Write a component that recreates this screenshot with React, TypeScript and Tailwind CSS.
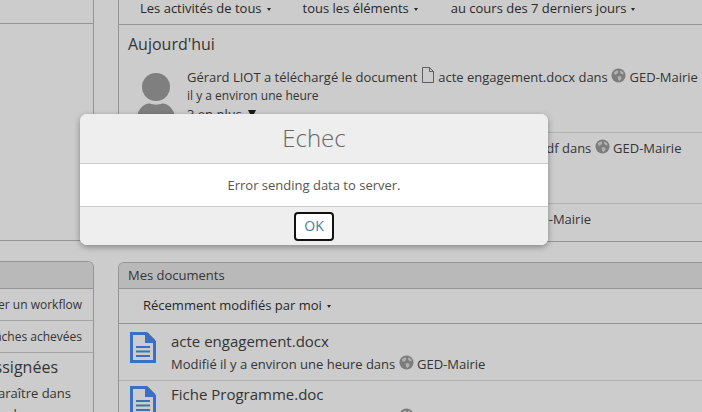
import React from 'react';

function Caret() {
  return <span className="ml-[5px] inline-block align-middle w-0 h-0 border-x-[2.5px] border-x-transparent border-t-[3px] border-t-[#333]" />;
}

function Globe() {
  return (
    <svg className="inline-block align-[-1px]" width="15" height="15" viewBox="0 0 16 16">
      <circle cx="8" cy="8" r="7.5" fill="#9c9c9c" />
      <path d="M3 4.5 6.5 2.5 8 4 6.5 6.5 4 7.5Z" fill="#dcdcdc" />
      <path d="M10 2.5 13 4.5 13.5 7 11 6.5 9.5 4.5Z" fill="#dcdcdc" />
      <path d="M7 9 10 8.5 11.5 11 9 14 7.5 12Z" fill="#dcdcdc" />
    </svg>
  );
}

function FileOutline() {
  return (
    <svg className="inline-block align-[-1px]" width="14" height="16" viewBox="0 0 14 16" fill="none" stroke="#777" strokeWidth="1">
      <path d="M1.5.5h7l4 4v11h-11Z" />
      <path d="M8.5.5v4h4" />
    </svg>
  );
}

function Avatar() {
  return (
    <svg width="40" height="62" viewBox="0 0 40 62" fill="#9f9f9f">
      <circle cx="20" cy="14" r="14" />
      <path d="M0 50C0 37 8 30 14 30.5 17 32 23 32 26 30.5 32 30 40 37 40 50V62H0Z" />
    </svg>
  );
}

function DocIcon() {
  return (
    <svg width="26" height="31" viewBox="0 0 26 31" className="shrink-0">
      <path d="M1.5 1.5H16.5L24.5 9.5V29.5H1.5Z" fill="none" stroke="#4a8bf8" strokeWidth="3" />
      <path d="M15 1H18L25 8V11H15Z" fill="#4a8bf8" />
      <path d="M6 15H20M6 19.5H20M6 24H20" stroke="#4a8bf8" strokeWidth="2.2" />
    </svg>
  );
}

function DocRow({ name, className, textClass }: { name: string; className: string; textClass: string }) {
  return (
    <div className={`flex gap-[15px] pl-[11px] ${className}`}>
      <DocIcon />
      <div className={`whitespace-nowrap ${textClass}`}>
        <div className="text-[15px] leading-[20px]">{name}</div>
        <div className="text-[13px] leading-[20px] mt-[3px]">Modifié il y a environ une heure dans <Globe /> GED-Mairie</div>
      </div>
    </div>
  );
}

export default function App() {
  return (
    <div className="relative w-[702px] h-[412px] overflow-hidden bg-white font-['Open_Sans',sans-serif] text-[#444]">
      <div className="flex w-[702px] h-[412px] overflow-hidden">
        {/* left column, scrolled partly out of view */}
        <div className="w-[94px] shrink-0 flex flex-col items-end">
          <div className="w-[94px] h-[241px] shrink-0 border-r border-b border-[#bbb]">
            <div className="h-[24px] border-b border-[#bbb]" />
          </div>
          <div className="mt-[20px] w-[94px] h-[160px] shrink-0 border-r border-t border-[#bbb] rounded-tr-[6px] overflow-hidden whitespace-nowrap">
            <div className="h-[27px] bg-[#e8e8e8] border-b border-[#bbb]" />
            <div className="h-[32px] border-b border-[#ccc] flex items-center justify-end pr-[11px] text-[12px]">Démarrer un workflow</div>
            <div className="h-[32px] border-b border-[#ccc] flex items-center justify-end pr-[11px] text-[12px]">Mes tâches achevées</div>
            <div className="h-[27px] flex items-center justify-end pr-[35px] text-[16px]">Tâches assignées</div>
            <div className="flex justify-end pr-[22px] text-[13px] leading-[18px] pt-[4px]">Elles vont apparaître dans</div>
            <div className="flex justify-end pr-[41px] mt-[3px] text-[13px] leading-[18px]">ce tableau chaque</div>
          </div>
        </div>

        {/* right column */}
        <div className="ml-[24px] w-[600px] shrink-0 flex flex-col">
          <div className="h-[242px] shrink-0 border-l border-b border-[#bbb]">
            <div className="h-[25px] border-b border-[#bbb] flex text-[13px] leading-[16px] text-[#333]">
              <span className="ml-[21px]">Les activités de tous<Caret /></span>
              <span className="ml-[32px]">tous les éléments<Caret /></span>
              <span className="ml-[33px]">au cours des 7 derniers jours<Caret /></span>
            </div>
            <div className="pl-[9px] pt-[7px] h-[32px] text-[16px] leading-[24px]">Aujourd'hui</div>
            <div className="relative h-[76px] pt-[10px] pl-[68px] border-b border-[#ddd] whitespace-nowrap text-[13px] leading-[20px]">
              <div className="absolute left-[17px] top-[16px]"><Avatar /></div>
              <div>Gérard LIOT a téléchargé le document <FileOutline /> acte engagement.docx dans <Globe /> GED-Mairie</div>
              <div className="text-[12px] leading-[18px]">il y a environ une heure</div>
              <div className="text-[13px] leading-[18px] flex items-center gap-[6px]">3 en plus<span className="w-0 h-0 border-x-[4px] border-x-transparent border-t-[8px] border-t-[#222]" /></div>
            </div>
            <div className="h-[71px] pt-[5px] pl-[71px] border-b border-[#ddd] whitespace-nowrap text-[13px]">
              Gérard LIOT a téléchargé le document <FileOutline /> Note de service.pdf dans <Globe /> GED-Mairie
            </div>
            <div className="h-[37px] pt-[6px] pl-[283px] whitespace-nowrap text-[13px]">Téléchargé dans <Globe /> GED-Mairie</div>
          </div>

          <div className="mt-[20px] flex-1 border-l border-t border-[#bbb] rounded-tl-[6px] overflow-hidden">
            <div className="h-[26px] pl-[9px] bg-[#e8e8e8] border-b border-[#bbb] text-[13px] leading-[25px]">Mes documents</div>
            <div className="h-[35px] pl-[24px] border-b border-[#bbb] text-[13px] leading-[32px] text-[#333]">Récemment modifiés par moi<Caret /></div>
            <DocRow name="acte engagement.docx" className="h-[57px] pt-[8px] border-b border-[#ddd]" textClass="-mt-[1px]" />
            <DocRow name="Fiche Programme.doc" className="pt-[5px]" textClass="-mt-[2px]" />
          </div>
        </div>
      </div>

      {/* dimmed backdrop and dialog */}
      <div className="absolute inset-0 bg-black/20" />
      <div className="absolute left-[80px] top-[114px] w-[468px] h-[131px] rounded-[7px] bg-white overflow-hidden shadow-[0_2px_6px_rgba(0,0,0,0.35)] flex flex-col text-center">
        <div className="h-[50px] bg-[#eeeeee] border-b border-[#cccccc] text-[24px] font-light leading-[48px] text-[#666]">Echec</div>
        <div className="h-[42px] text-[13px] leading-[42px] text-[#555]">Error sending data to server.</div>
        <div className="flex-1 bg-[#eeeeee] border-t border-[#cccccc] flex items-center justify-center">
          <button className="w-[40px] h-[29px] bg-white border-2 border-[#111] rounded-[4px] text-[14px] leading-none text-[#4a7ba6]">OK</button>
        </div>
      </div>
    </div>
  );
}
